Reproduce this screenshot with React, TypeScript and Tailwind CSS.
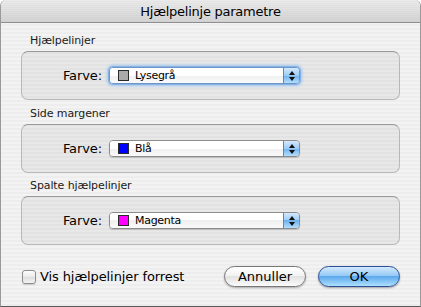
import React from "react";

const font = { fontFamily: '"DejaVu Sans", "Liberation Sans", sans-serif' };

function Stepper() {
  return (
    <div className="w-[16px] h-full flex flex-col items-center justify-center gap-[2px] border-l border-[#5d86bf] bg-[linear-gradient(#d3e9fd,#9ccbf4_50%,#6cb0ee_50%,#b4defd)]">
      <svg width="6" height="4" viewBox="0 0 6 4"><path d="M3 0 L6 4 L0 4 Z" fill="#111" /></svg>
      <svg width="6" height="4" viewBox="0 0 6 4"><path d="M0 0 L6 0 L3 4 Z" fill="#111" /></svg>
    </div>
  );
}

function Popup({ color, label, focus }: { color: string; label: string; focus?: boolean }) {
  return (
    <div
      className={
        "w-[191px] h-[17px] rounded-[4px] border flex overflow-hidden " +
        (focus
          ? "border-[#6f95c8] shadow-[0_0_0_1px_#86b2e4,0_0_3px_2px_#9fc6f0]"
          : "border-[#8c8c8c] shadow-[0_1px_1px_rgba(0,0,0,0.18)]")
      }
    >
      <div className="flex-1 flex items-center pl-[8px] bg-[linear-gradient(#ffffff,#ffffff_50%,#efefef_50%,#fafafa)]">
        <div className="w-[11px] h-[11px] border border-[#2a2a2a]" style={{ backgroundColor: color }} />
        <span className="ml-[6px] text-[11px] tracking-[-0.3px] leading-none text-black">{label}</span>
      </div>
      <Stepper />
    </div>
  );
}

function Group({ title, color, label, focus, mt }: { title: string; color: string; label: string; focus?: boolean; mt: string }) {
  return (
    <div className={"flex flex-col " + mt}>
      <div className="h-[14px] leading-[14px] text-[11px] tracking-[-0.1px] pl-[9px] text-[#1a1a1a]">{title}</div>
      <div className="mt-[3px] h-[49px] rounded-[7px] border border-[#b8b8b8] border-t-[#999999] bg-black/[0.045] flex items-center">
        <div className="w-[80px] text-right text-[13px] tracking-[-0.1px] text-black">Farve:</div>
        <div className="ml-[7px]">
          <Popup color={color} label={label} focus={focus} />
        </div>
      </div>
    </div>
  );
}

export default function App() {
  return (
    <div style={font} className="w-[421px] h-[307px] bg-white">
      <div className="w-[421px] h-[307px] flex flex-col rounded-t-[6px] overflow-hidden border-l border-r border-b border-l-[#9a9a9a] border-r-[#9a9a9a] border-b-[#5a5a5a] bg-[repeating-linear-gradient(0deg,#ededed_0px,#ededed_2px,#f3f3f3_2px,#f3f3f3_4px)]">
        <div className="h-[23px] shrink-0 border-b border-[#8f8f8f] flex items-center justify-center bg-[repeating-linear-gradient(0deg,rgba(0,0,0,0.025)_0px,rgba(0,0,0,0.025)_1px,transparent_1px,transparent_2px),linear-gradient(#ebebeb,#d4d4d4)]">
          <span className="text-[13px] tracking-[-0.25px] text-black leading-none">Hjælpelinje parametre</span>
        </div>
        <div className="flex flex-col px-[20px] pt-[11px]">
          <Group title="Hjælpelinjer" color="#aaaaaa" label="Lysegrå" focus mt="" />
          <Group title="Side margener" color="#0000ff" label="Blå" mt="mt-[7px]" />
          <Group title="Spalte hjælpelinjer" color="#ff00ff" label="Magenta" mt="mt-[6px]" />
          <div className="mt-[21px] h-[21px] flex items-center">
            <div className="ml-[1px] w-[14px] h-[14px] rounded-[3px] border border-[#8d8d8d] bg-[linear-gradient(#fdfdfd,#eaeaea_50%,#dcdcdc_50%,#f4f4f4)] shadow-[0_1px_1px_rgba(0,0,0,0.15)]" />
            <span className="ml-[4px] text-[13px] tracking-[-0.1px] text-black">Vis hjælpelinjer forrest</span>
            <div className="ml-auto flex gap-[12px]">
              <div className="w-[82px] h-[21px] rounded-full border border-[#777777] flex items-center justify-center bg-[linear-gradient(#ffffff,#f2f2f2_50%,#e2e2e2_50%,#fbfbfb)] shadow-[0_1px_2px_rgba(0,0,0,0.3)]">
                <span className="text-[13px] text-black leading-none">Annuller</span>
              </div>
              <div className="w-[82px] h-[21px] rounded-full border border-[#2d4f98] flex items-center justify-center bg-[linear-gradient(#d4e9fd,#8fc6f4_50%,#5ea9ed_50%,#ade0fe)] shadow-[0_1px_2px_rgba(0,0,0,0.35)]">
                <span className="text-[13px] text-black leading-none">OK</span>
              </div>
            </div>
          </div>
        </div>
      </div>
    </div>
  );
}
